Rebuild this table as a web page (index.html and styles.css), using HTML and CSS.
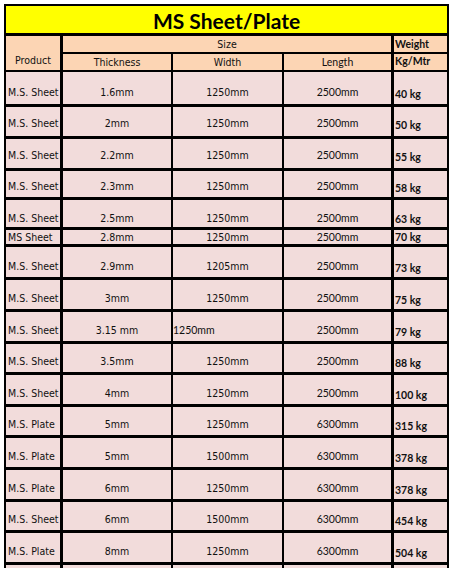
FILE: index.html
```html
<!DOCTYPE html>
<html>
<head>
<meta charset="utf-8">
<link rel="stylesheet" href="styles.css">
</head>
<body>
<div class="sheet">
  <div class="title">MS Sheet/Plate</div>
  <div class="h product">Product</div>
  <div class="h size">Size</div>
  <div class="h weight-h">Weight</div>
  <div class="h sub c2">Thickness</div>
  <div class="h sub c3">Width</div>
  <div class="h sub c4">Length</div>
  <div class="h sub c5 weight-h">Kg/Mtr</div>

  <div class="c c1 r-first">M.S. Sheet</div><div class="c c2 r-first">1.6mm</div><div class="c c3 r-first">1250mm</div><div class="c c4 r-first">2500mm</div><div class="c c5 r-first">40 kg</div>
  <div class="c c1 r-high">M.S. Sheet</div><div class="c c2 r-high">2mm</div><div class="c c3 r-high">1250mm</div><div class="c c4 r-high">2500mm</div><div class="c c5 r-high">50 kg</div>
  <div class="c c1 r-high">M.S. Sheet</div><div class="c c2 r-high">2.2mm</div><div class="c c3 r-high">1250mm</div><div class="c c4 r-high">2500mm</div><div class="c c5 r-high">55 kg</div>
  <div class="c c1">M.S. Sheet</div><div class="c c2">2.3mm</div><div class="c c3">1250mm</div><div class="c c4">2500mm</div><div class="c c5">58 kg</div>
  <div class="c c1 r-low">M.S. Sheet</div><div class="c c2 r-low">2.5mm</div><div class="c c3 r-low">1250mm</div><div class="c c4 r-low">2500mm</div><div class="c c5 r-low">63 kg</div>
  <div class="c c1 r-short">MS Sheet</div><div class="c c2 r-short">2.8mm</div><div class="c c3 r-short">1250mm</div><div class="c c4 r-short">2500mm</div><div class="c c5 r-short">70 kg</div>
  <div class="c c1">M.S. Sheet</div><div class="c c2">2.9mm</div><div class="c c3">1205mm</div><div class="c c4">2500mm</div><div class="c c5">73 kg</div>
  <div class="c c1">M.S. Sheet</div><div class="c c2">3mm</div><div class="c c3">1250mm</div><div class="c c4">2500mm</div><div class="c c5">75 kg</div>
  <div class="c c1">M.S. Sheet</div><div class="c c2">3.15 mm</div><div class="c c3 left">1250mm</div><div class="c c4">2500mm</div><div class="c c5">79 kg</div>
  <div class="c c1">M.S. Sheet</div><div class="c c2">3.5mm</div><div class="c c3">1250mm</div><div class="c c4">2500mm</div><div class="c c5">88 kg</div>
  <div class="c c1">M.S. Sheet</div><div class="c c2">4mm</div><div class="c c3">1250mm</div><div class="c c4">2500mm</div><div class="c c5">100 kg</div>
  <div class="c c1">M.S. Plate</div><div class="c c2">5mm</div><div class="c c3">1250mm</div><div class="c c4">6300mm</div><div class="c c5">315 kg</div>
  <div class="c c1">M.S. Plate</div><div class="c c2">5mm</div><div class="c c3">1500mm</div><div class="c c4">6300mm</div><div class="c c5">378 kg</div>
  <div class="c c1">M.S. Plate</div><div class="c c2">6mm</div><div class="c c3">1250mm</div><div class="c c4">6300mm</div><div class="c c5">378 kg</div>
  <div class="c c1">M.S. Sheet</div><div class="c c2">6mm</div><div class="c c3">1500mm</div><div class="c c4">6300mm</div><div class="c c5">454 kg</div>
  <div class="c c1">M.S. Plate</div><div class="c c2">8mm</div><div class="c c3">1250mm</div><div class="c c4">6300mm</div><div class="c c5">504 kg</div>
  <div class="c c1 r-short">M.S. Plate</div><div class="c c2 r-short">8mm</div><div class="c c3 r-short">1500mm</div><div class="c c4 r-short">6300mm</div><div class="c c5 r-short">605 kg</div>
</div>
</body>
</html>
```

FILE: styles.css
```css
html, body {
  margin: 0;
  padding: 0;
  overflow: hidden;
  background: #ffffff;
}

body {
  padding: 4px 0 0 4px;
}

.sheet {
  display: grid;
  width: max-content;
  grid-template-columns: 57px 110px 111px 110px 55px;
  grid-template-rows: 30px 18px 18px 35px 32px 32px 29px 30px 17px 33px 32px 32px 31px 32px 31px 32px 32px 31px 32px 20px;
  border-left: 2px solid #000;
  border-top: 2px solid #000;
  color: #111;
}

.sheet > div {
  box-sizing: border-box;
  display: flex;
  overflow: hidden;
  white-space: nowrap;
}

.title {
  grid-column: 1 / -1;
  background: #ffff00;
  border-right: 2px solid #000;
  border-bottom: 3px solid #000;
  justify-content: center;
  align-items: center;
  padding-top: 2px;
  font-family: Lato, "Liberation Sans", sans-serif;
  font-weight: 700;
  font-size: 21px;
  color: #000;
}

.h {
  background: #fcd5b4;
  border-bottom: 2px solid #000;
  font-family: "DejaVu Sans Condensed", "DejaVu Sans", sans-serif;
  font-stretch: condensed;
  font-size: 10.5px;
  line-height: 13px;
  align-items: center;
  justify-content: center;
}

.product {
  grid-row: 2 / span 2;
  border-right: 3px solid #000;
  align-items: flex-end;
  padding-bottom: 3px;
}

.size {
  grid-column: 2 / 5;
  border-right: 3px solid #000;
}

.weight-h {
  justify-content: flex-start;
  padding-left: 1px;
  border-right: 2px solid #000;
  font-family: Lato, "Liberation Sans", sans-serif;
  font-weight: 700;
  font-size: 10.5px;
  color: #111;
}

.c {
  background: #f2dcdb;
  border-bottom: 3px solid #000;
  align-items: flex-end;
  justify-content: center;
  padding-bottom: 4px;
  line-height: 13px;
  font-family: "DejaVu Sans Condensed", "DejaVu Sans", sans-serif;
  font-stretch: condensed;
  font-size: 10.5px;
}

.c1 {
  border-right: 3px solid #000;
  justify-content: flex-start;
  padding-left: 2px;
}

.c2 {
  border-right: 2px solid #000;
}

.c3 {
  border-right: 2px solid #000;
}

.c4 {
  border-right: 3px solid #000;
  font-family: Lato, "Liberation Sans", sans-serif;
  font-size: 10.5px;
}

.c5 {
  border-right: 2px solid #000;
  justify-content: flex-start;
  padding-left: 1px;
  padding-bottom: 2px;
  font-family: Lato, "Liberation Sans", sans-serif;
  font-weight: 700;
  font-size: 10.5px;
}

.left {
  justify-content: flex-start;
  padding-left: 0;
  font-family: Lato, "Liberation Sans", sans-serif;
  font-stretch: normal;
}

.r-first {
  padding-bottom: 5px;
}

.r-first.c5 {
  padding-bottom: 3px;
}

.r-high {
  padding-bottom: 6px;
}

.r-high.c5 {
  padding-bottom: 4px;
}

.r-low {
  padding-bottom: 2px;
}

.r-low.c5 {
  padding-bottom: 1px;
}

.r-short {
  padding-bottom: 0;
}

.r-short.c5 {
  padding-bottom: 0;
}
```
